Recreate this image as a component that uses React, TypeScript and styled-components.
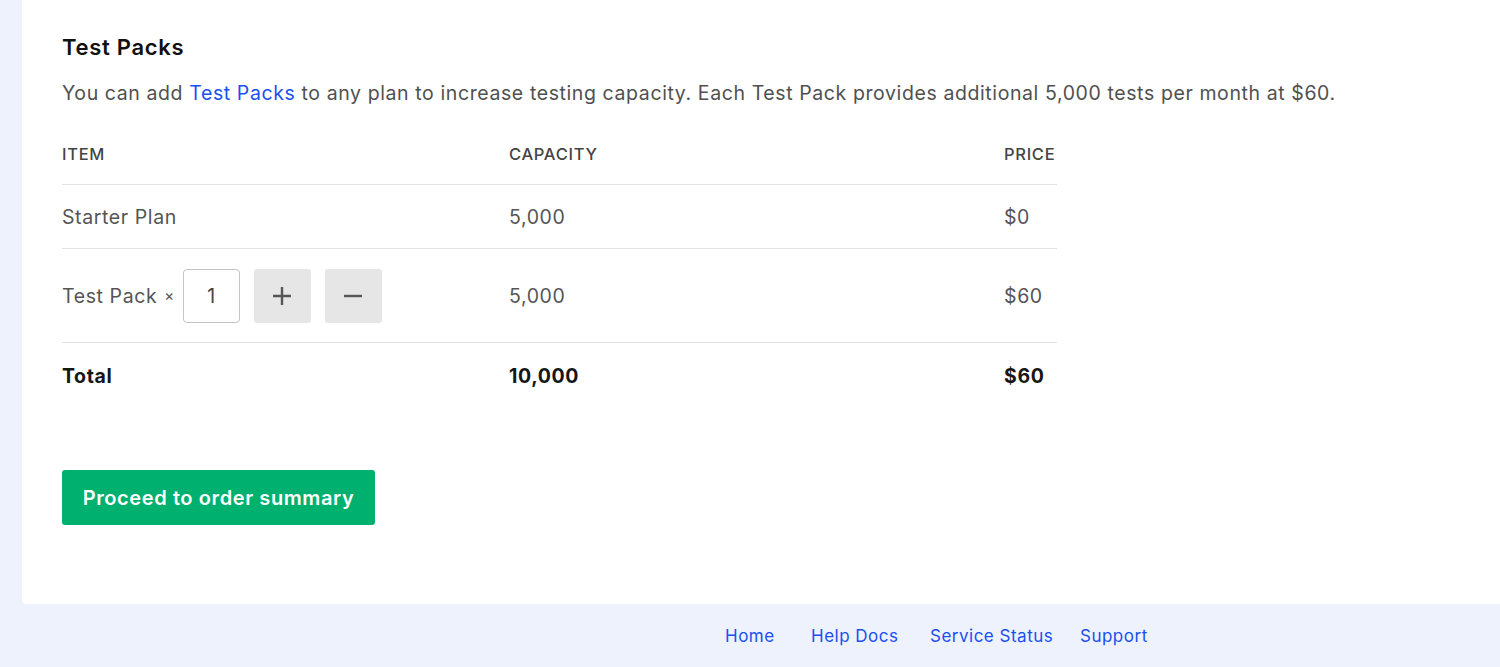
import React, { useState } from "react";
import styled, { createGlobalStyle } from "styled-components";

const Global = createGlobalStyle`
  html, body { margin: 0; padding: 0; background: #eef2fd; }
  body { font-family: Inter, "Noto Sans", "Liberation Sans", sans-serif; -webkit-font-smoothing: antialiased; }
  * { box-sizing: border-box; }
`;

const Page = styled.div`
  display: flex;
  flex-direction: column;
  min-height: 667px;
  background: #eef2fd;
  padding-left: 22px;
`;

const Panel = styled.main`
  background: #ffffff;
  border-bottom-left-radius: 4px;
  height: 604px;
  padding: 33px 40px 0 40px;
`;

const Title = styled.h2`
  margin: 0;
  font-size: 22px;
  line-height: 28px;
  font-weight: 600;
  letter-spacing: 0.7px;
  color: #111;
`;

const Lead = styled.p`
  margin: 18px 0 0 0;
  font-size: 19.5px;
  line-height: 28px;
  letter-spacing: 0.6px;
  color: #505050;
`;

const Link = styled.a`
  color: #1a4ff0;
  text-decoration: none;
`;

const Table = styled.div`
  margin-top: 16px;
  width: 995px;
  display: grid;
  grid-template-columns: 447px 495px 1fr;
`;

const Row = styled.div<{ $h: number; $border?: boolean }>`
  display: contents;
  & > div {
    height: ${(p) => p.$h}px;
    border-bottom: ${(p) => (p.$border ? "1.5px solid #e3e3e3" : "none")};
  }
`;

const Cell = styled.div<{ $kind?: "head" | "body" | "total" }>`
  display: flex;
  align-items: center;
  gap: 8px;
  font-size: ${(p) => (p.$kind === "head" ? "16.5px" : "19.5px")};
  letter-spacing: ${(p) => (p.$kind === "head" ? "0.7px" : "0.6px")};
  font-weight: ${(p) => (p.$kind === "head" ? 500 : p.$kind === "total" ? 700 : 400)};
  text-transform: ${(p) => (p.$kind === "head" ? "uppercase" : "none")};
  color: ${(p) => (p.$kind === "total" ? "#161616" : p.$kind === "head" ? "#444" : "#555")};
`;

const Times = styled.span`
  font-size: 15px;
  margin-left: -1px;
`;

const Stepper = styled.div`
  display: flex;
  align-items: center;
  gap: 14px;
`;

const Qty = styled.input`
  width: 57px;
  height: 54px;
  border: 1.5px solid #c4c4c4;
  border-radius: 4px;
  font-family: inherit;
  font-size: 19.5px;
  color: #444;
  text-align: center;
  padding: 0;
  outline: none;
`;

const StepButton = styled.button`
  width: 57px;
  height: 54px;
  border: none;
  border-radius: 3px;
  background: #e6e6e6;
  display: flex;
  align-items: center;
  justify-content: center;
  padding: 0;
  cursor: pointer;
`;

const Proceed = styled.button`
  margin-top: 61px;
  width: 313px;
  height: 55px;
  border: none;
  border-radius: 3px;
  background: #00b06f;
  color: #fff;
  font-family: inherit;
  font-size: 20px;
  letter-spacing: 0.6px;
  font-weight: 600;
  cursor: pointer;
`;

const Footer = styled.footer`
  height: 63px;
  display: flex;
  align-items: center;
  padding-left: 703px;
`;

const FootLink = styled.a<{ $w: number }>`
  width: ${(p) => p.$w}px;
  font-size: 17px;
  letter-spacing: 0.5px;
  color: #1a4ff0;
  text-decoration: none;
`;

export default function App() {
  const [n, setN] = useState(1);
  const total = 5000 + n * 5000;
  return (
    <Page>
      <Global />
      <Panel>
        <Title>Test Packs</Title>
        <Lead>
          You can add <Link href="#">Test Packs</Link> to any plan to increase testing capacity. Each Test Pack
          provides additional 5,000 tests per month at $60.
        </Lead>
        <Table>
          <Row $h={62} $border>
            <Cell $kind="head">Item</Cell>
            <Cell $kind="head">Capacity</Cell>
            <Cell $kind="head">Price</Cell>
          </Row>
          <Row $h={64} $border>
            <Cell>Starter Plan</Cell>
            <Cell>5,000</Cell>
            <Cell>$0</Cell>
          </Row>
          <Row $h={94} $border>
            <Cell>
              Test Pack <Times>×</Times>
              <Stepper>
                <Qty value={n} onChange={(e) => setN(Number(e.target.value) || 0)} />
                <StepButton onClick={() => setN(n + 1)} aria-label="add">
                  <svg width="20" height="20" viewBox="0 0 20 20">
                    <path d="M10 1v18M1 10h18" stroke="#555" strokeWidth="2.4" />
                  </svg>
                </StepButton>
                <StepButton onClick={() => setN(Math.max(0, n - 1))} aria-label="remove">
                  <svg width="20" height="20" viewBox="0 0 20 20">
                    <path d="M1 10h18" stroke="#555" strokeWidth="2.4" />
                  </svg>
                </StepButton>
              </Stepper>
            </Cell>
            <Cell>{(n * 5000).toLocaleString("en-US")}</Cell>
            <Cell>${n * 60}</Cell>
          </Row>
          <Row $h={66}>
            <Cell $kind="total">Total</Cell>
            <Cell $kind="total">{total.toLocaleString("en-US")}</Cell>
            <Cell $kind="total">${n * 60}</Cell>
          </Row>
        </Table>
        <Proceed>Proceed to order summary</Proceed>
      </Panel>
      <Footer>
        <FootLink $w={86} href="#">Home</FootLink>
        <FootLink $w={119} href="#">Help Docs</FootLink>
        <FootLink $w={150} href="#">Service Status</FootLink>
        <FootLink $w={90} href="#">Support</FootLink>
      </Footer>
    </Page>
  );
}
